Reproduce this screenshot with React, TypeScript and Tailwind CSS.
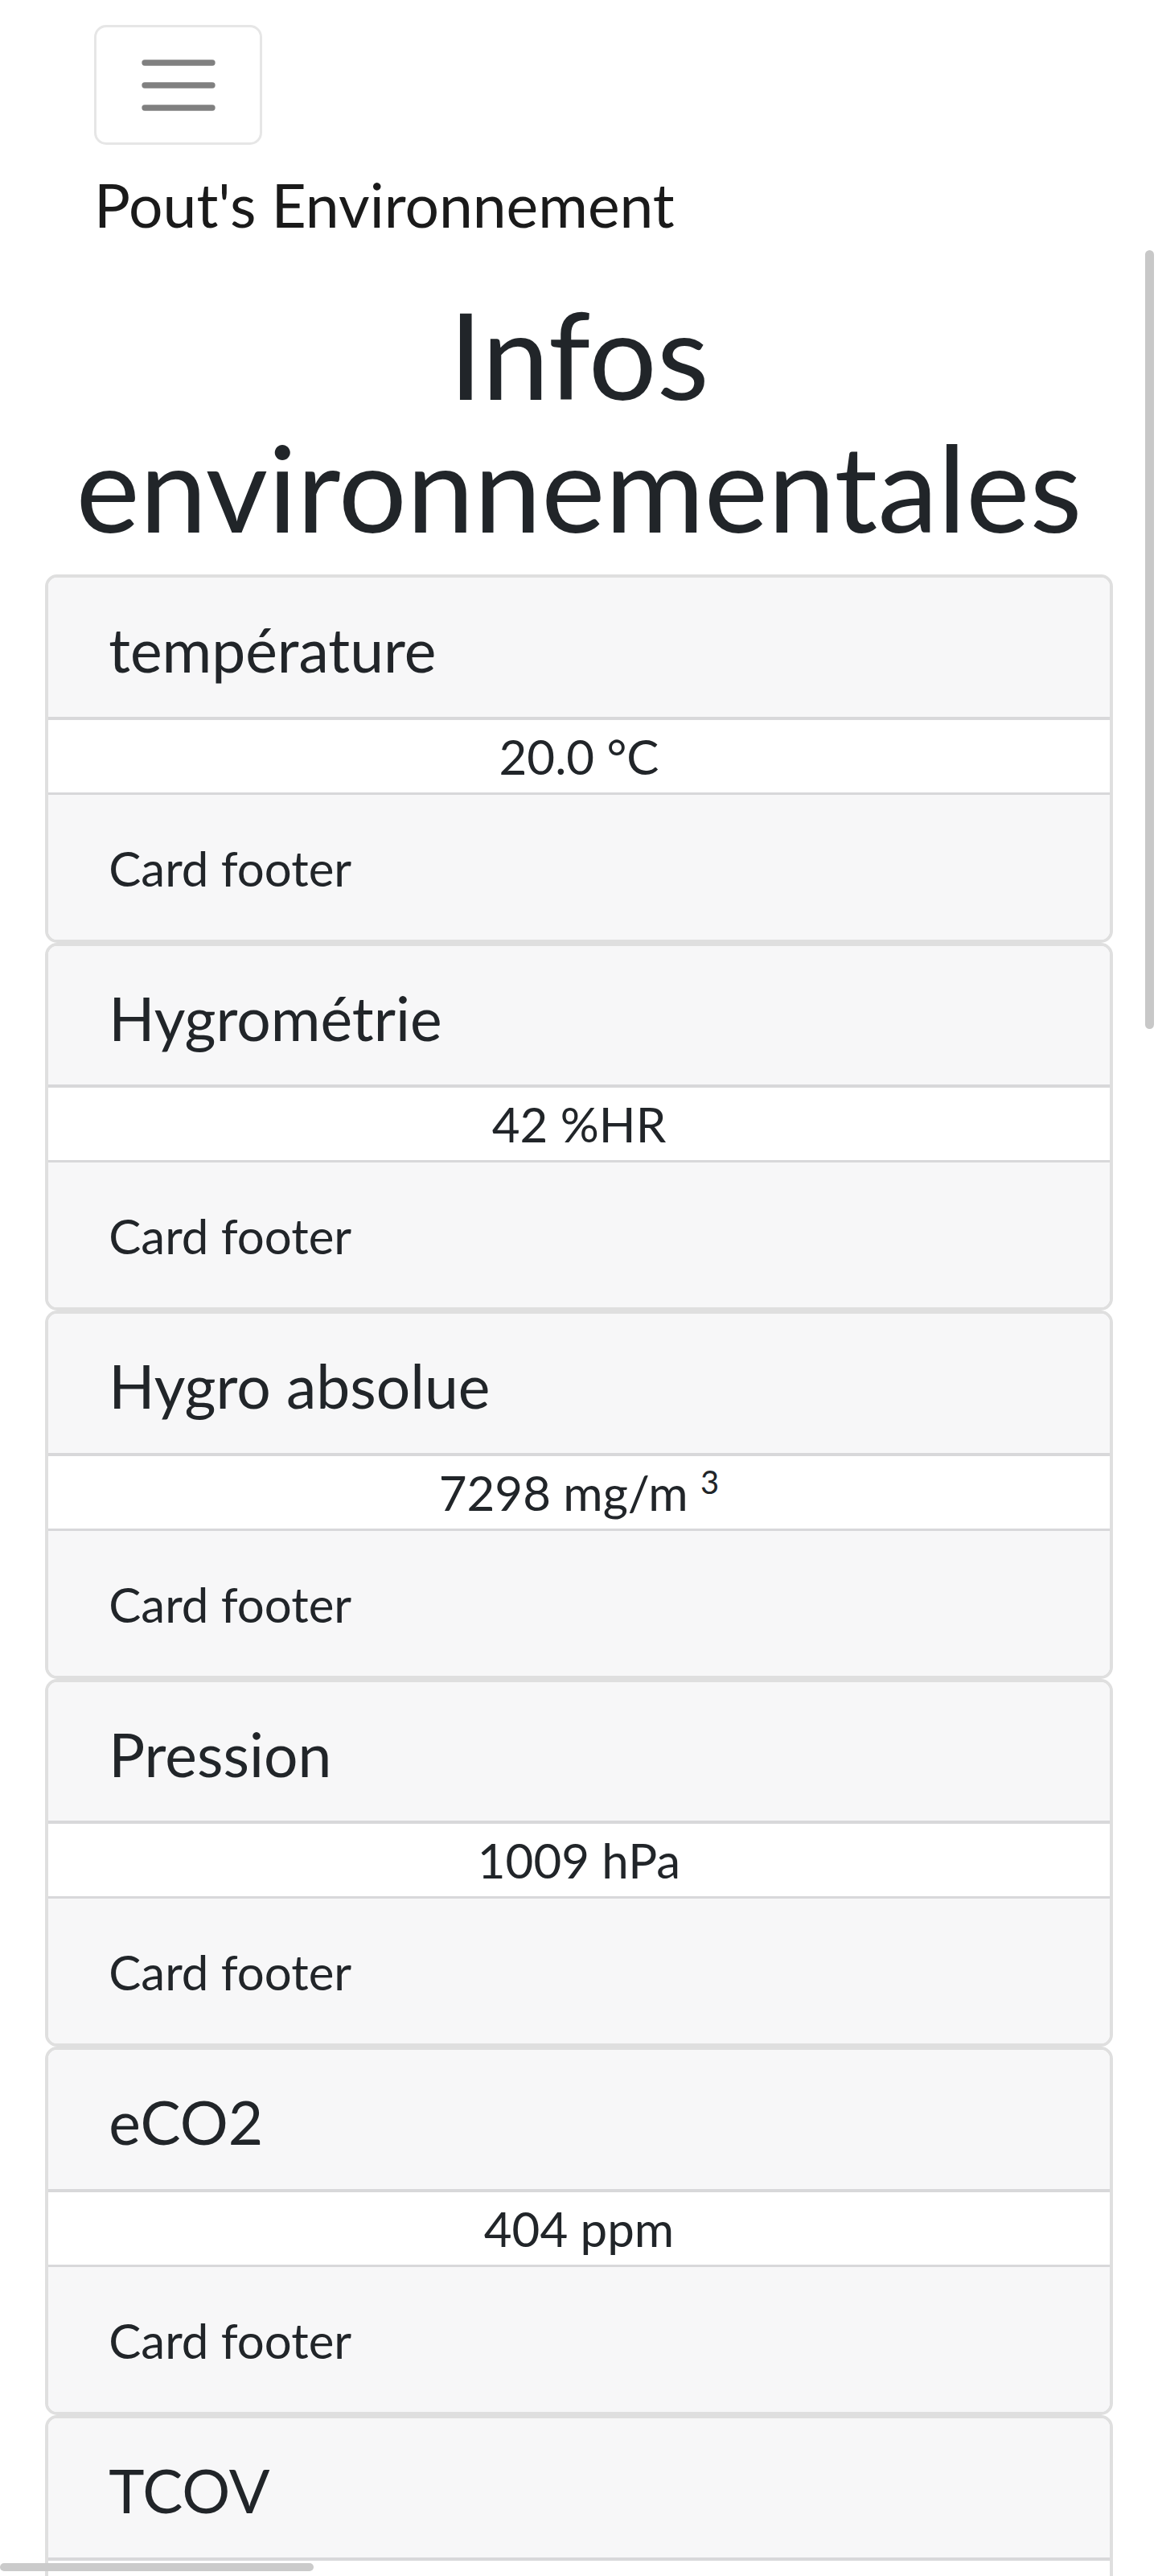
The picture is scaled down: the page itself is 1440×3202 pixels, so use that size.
const cards = [
  { title: "température", value: "20.0 °C" },
  { title: "Hygrométrie", value: "42 %HR" },
  { title: "Hygro absolue", value: "7298 mg/m", sup: "3" },
  { title: "Pression", value: "1009 hPa" },
  { title: "eCO2", value: "404 ppm" },
];

function Toggler() {
  return (
    <button className="w-[209px] h-[149px] border-[3.5px] border-[#e6e6e6] rounded-[15px] flex items-center justify-center bg-white">
      <svg width="92" height="64" viewBox="0 0 92 64" fill="none">
        <path
          d="M4 4h84M4 32h84M4 60h84"
          stroke="#808080"
          strokeWidth="7.3"
          strokeLinecap="round"
        />
      </svg>
    </button>
  );
}

function Card({ title, value, sup, footer = true }: { title: string; value?: string; sup?: string; footer?: boolean }) {
  return (
    <div className="border-4 border-[#dfdfdf] rounded-[15px] overflow-hidden bg-white">
      <div className="bg-[#f7f7f8] border-b-4 border-[#d8d8da] px-[75px] pt-[48px] pb-[42px]">
        <h5 className="text-[75px] leading-[82.6px] m-0">{title}</h5>
      </div>
      <div className="h-[90px] text-center text-[60px] leading-[90px]">
        {value}
        {sup && (
          <>
            {" "}
            <sup className="text-[40px] relative -top-[21px] align-baseline">{sup}</sup>
          </>
        )}
      </div>
      {footer && (
        <div className="bg-[#f7f7f8] border-t-[3px] border-[#d8d8da] px-[75px] pt-[46px] pb-[44px] text-[60px] leading-[90px]">
          Card footer
        </div>
      )}
    </div>
  );
}

export default function App() {
  return (
    <div className="relative w-full h-[3202px] overflow-hidden bg-white text-[#212529] font-['Lato',sans-serif]">
      <nav className="flex flex-col items-start px-[117px] pt-[31px]">
        <Toggler />
        <a className="mt-[37px] text-[75px] leading-[75px] text-[#1a1a1a]">Pout's Environnement</a>
      </nav>

      <main className="px-[56.25px]">
        <h1 className="mt-[65px] mb-[27px] text-center text-[150px] leading-[165px] font-normal">
          Infos environnementales
        </h1>
        <div className="flex flex-col">
          {cards.map((c) => (
            <Card key={c.title} {...c} />
          ))}
          {/* last card runs past the bottom of the screen */}
          <Card title="TCOV" footer={false} />
        </div>
      </main>

      <div className="absolute left-[1424px] top-[311px] w-[11px] h-[968px] rounded-full bg-[#c8c8c8]" />
      <div className="absolute left-0 top-[3186px] w-[390px] h-[10px] rounded-full bg-[#cbcbcb]" />
    </div>
  );
}
